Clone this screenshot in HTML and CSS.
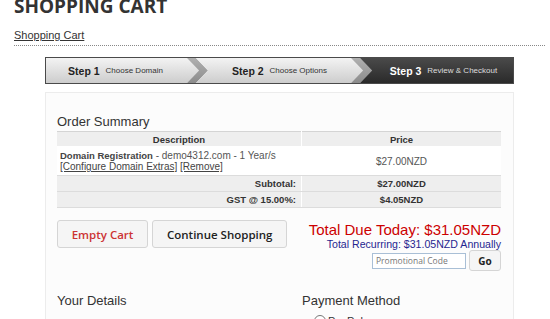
FILE: index.html
```html
<!DOCTYPE html>
<html>

<head>
<title>Shopping Cart</title>
<link rel="stylesheet" href="styles.css">
</head>

<body>
<div class="page">
<h1>SHOPPING CART</h1>
<div class="crumb"><a href="#">Shopping Cart</a></div>

<div class="steps">
	<div class="step"><b>Step 1</b><span>Choose Domain</span></div>
	<svg class="chev" width="25" height="25" viewBox="0 0 25 25">
		<defs>
			<linearGradient id="lite1" x1="0" y1="0" x2="0" y2="1"><stop offset="0" stop-color="#f3f3f3" /><stop offset="1" stop-color="#cdcdcd" /></linearGradient>
			<linearGradient id="band1" x1="0" y1="0" x2="0" y2="1"><stop offset="0" stop-color="#b0b0b0" /><stop offset="1" stop-color="#8c8c8c" /></linearGradient>
		</defs>
		<polygon points="0,0 2,0 14,12.5 2,25 0,25" fill="url(#lite1)" />
		<polygon points="2,0 11,0 23,12.5 11,25 2,25 14,12.5" fill="url(#band1)" />
		<polygon points="11,0 25,0 25,25 11,25 23,12.5" fill="url(#lite1)" />
	</svg>
	<div class="step"><b>Step 2</b><span>Choose Options</span></div>
	<svg class="chev" width="25" height="25" viewBox="0 0 25 25">
		<defs>
			<linearGradient id="lite2" x1="0" y1="0" x2="0" y2="1"><stop offset="0" stop-color="#f3f3f3" /><stop offset="1" stop-color="#cdcdcd" /></linearGradient>
			<linearGradient id="band2" x1="0" y1="0" x2="0" y2="1"><stop offset="0" stop-color="#b0b0b0" /><stop offset="1" stop-color="#8c8c8c" /></linearGradient>
			<linearGradient id="dark2" x1="0" y1="0" x2="0" y2="1"><stop offset="0" stop-color="#4a4a4a" /><stop offset="1" stop-color="#2a2a2a" /></linearGradient>
		</defs>
		<polygon points="0,0 2,0 14,12.5 2,25 0,25" fill="url(#lite2)" />
		<polygon points="2,0 11,0 23,12.5 11,25 2,25 14,12.5" fill="url(#band2)" />
		<polygon points="11,0 25,0 25,25 11,25 23,12.5" fill="url(#dark2)" />
	</svg>
	<div class="step current"><b>Step 3</b><span>Review &amp; Checkout</span></div>
</div>

<div class="cart">
	<h2>Order Summary</h2>
	<table class="summary">
		<tr><th class="col1">Description</th><th>Price</th></tr>
		<tr class="item">
			<td class="desc"><b>Domain Registration</b> - demo4312.com - 1 Year/s<br /><a href="#">[Configure Domain Extras]</a> <a href="#">[Remove]</a></td>
			<td class="price">$27.00NZD</td>
		</tr>
		<tr class="total"><td class="label">Subtotal:</td><td class="price">$27.00NZD</td></tr>
		<tr class="total"><td class="label">GST @ 15.00%:</td><td class="price">$4.05NZD</td></tr>
	</table>

	<div class="actions">
		<div class="buttons">
			<button class="btn danger">Empty Cart</button>
			<button class="btn">Continue Shopping</button>
		</div>
		<div class="totals">
			<div class="due">Total Due Today: $31.05NZD</div>
			<div class="recurring">Total Recurring: $31.05NZD Annually</div>
			<div class="promo"><input type="text" placeholder="Promotional Code" /><button class="btn go">Go</button></div>
		</div>
	</div>

	<div class="details">
		<div>
			<h2>Your Details</h2>
			<div class="fields"><label class="first">First Name</label><label>Email</label></div>
		</div>
		<div>
			<h2>Payment Method</h2>
			<label class="radio"><input type="radio" name="gateway" />PayPal</label>
		</div>
	</div>
</div>
</div>
</body>

</html>
```

FILE: styles.css
```css
body { margin: 0; font-family: "Liberation Sans", Arial, sans-serif; color: #333; background: #fff; }
.page { padding: 0 5px 0 14px; }
h1 { margin: -3px 0 0; font-family: "Open Sans", sans-serif; font-weight: 700; font-size: 19px; line-height: 19px; color: #333; }
.crumb { margin-top: 13px; padding-bottom: 3px; border-bottom: 1px dotted #888; font-size: 11px; line-height: 13px; }
.crumb a { color: #333; }

.steps { display: flex; width: 467px; height: 25px; margin: 11px auto 0; border: 1px solid #4a4a4a; }
.step { flex: 1; display: flex; align-items: center; justify-content: center; background: linear-gradient(#f3f3f3, #cdcdcd); color: #222; white-space: nowrap; }
.step b { font-size: 10.5px; }
.step span { margin-left: 6px; font-size: 8px; color: #333; }
.step.current { background: linear-gradient(#4a4a4a, #2a2a2a); }
.step.current b { color: #fff; }
.step.current span { color: #ddd; }
.chev { display: block; flex: none; }

.cart { width: 444px; margin: 8px auto 0; padding: 21px 12px 20px 11px; border: 1px solid #ececec; background: #fcfcfc; }
h2 { margin: 0 0 1px; font-size: 13px; line-height: 16px; font-weight: normal; color: #333; }

.summary { width: 100%; border-collapse: collapse; table-layout: fixed; font-size: 10px; line-height: 11px; color: #555; }
.summary th { height: 14px; padding: 0 3px; border-top: 1px solid #d4d4d4; background: #eee; font-size: 9.5px; color: #333; }
.summary .col1 { width: 238px; }
.summary td { padding: 2px 3px; border-bottom: 1px solid #dcdcdc; background: #eee; }
.summary th:first-child, .summary td:first-child { border-right: 1px solid #fff; }
.summary .item td { padding: 4px 3px 3px; background: #fff; }
.summary .desc b { font-size: 9.5px; color: #444; }
.summary .desc a { color: #444; }
.summary .price { text-align: center; }
.summary .total td { font-weight: bold; font-size: 9.5px; color: #333; }
.summary .total .label { text-align: right; padding-right: 5px; }

.actions { display: flex; justify-content: space-between; align-items: flex-start; margin-top: 12px; }
.buttons { display: flex; gap: 4px; }
.btn { height: 28px; padding: 0 14px; border: 1px solid #d5d5d5; border-radius: 3px; background: #f5f5f5; font-family: "Open Sans", sans-serif; font-weight: 600; font-size: 11.5px; color: #222; white-space: nowrap; }
.btn.danger { width: 91px; padding: 0; color: #cc3333; }
.btn.go { width: 32px; height: 21px; padding: 0; font-weight: 700; font-size: 10px; }
.totals { margin-top: 1px; text-align: right; }
.due { font-size: 15px; line-height: 17px; color: #cc0000; }
.recurring { font-size: 10.6px; line-height: 12px; color: #262690; }
.promo { display: flex; justify-content: flex-end; align-items: center; gap: 3px; }
.promo input { box-sizing: border-box; width: 94px; height: 16px; padding: 0 3px; border: 1px solid #a9bfd6; font-family: "Open Sans", sans-serif; font-size: 8.5px; }
.promo input::placeholder { color: #777; }

.details { display: grid; grid-template-columns: 245px 1fr; margin-top: 22px; }
.fields { display: flex; margin-top: 9px; padding-left: 3px; font-size: 11px; }
.fields .first { width: 79px; }
.radio { display: flex; align-items: center; margin-top: 6px; padding-left: 12px; font-size: 11px; }
.radio input { margin: 0 2px 0 0; width: 12px; height: 12px; }
```
